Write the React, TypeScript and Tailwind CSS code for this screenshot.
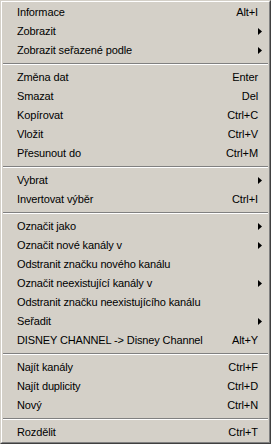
import React from "react";

type Item =
  | { sep: true }
  | { label: string; shortcut?: string; sub?: boolean; sep?: false };

const items: Item[] = [
  { label: "Informace", shortcut: "Alt+I" },
  { label: "Zobrazit", sub: true },
  { label: "Zobrazit seřazené podle", sub: true },
  { sep: true },
  { label: "Změna dat", shortcut: "Enter" },
  { label: "Smazat", shortcut: "Del" },
  { label: "Kopírovat", shortcut: "Ctrl+C" },
  { label: "Vložit", shortcut: "Ctrl+V" },
  { label: "Přesunout do", shortcut: "Ctrl+M" },
  { sep: true },
  { label: "Vybrat", sub: true },
  { label: "Invertovat výběr", shortcut: "Ctrl+I" },
  { sep: true },
  { label: "Označit jako", sub: true },
  { label: "Označit nové kanály v", sub: true },
  { label: "Odstranit značku nového kanálu" },
  { label: "Označit neexistující kanály v", sub: true },
  { label: "Odstranit značku neexistujícího kanálu" },
  { label: "Seřadit", sub: true },
  { label: "DISNEY CHANNEL -> Disney Channel", shortcut: "Alt+Y" },
  { sep: true },
  { label: "Najít kanály", shortcut: "Ctrl+F" },
  { label: "Najít duplicity", shortcut: "Ctrl+D" },
  { label: "Nový", shortcut: "Ctrl+N" },
  { sep: true },
  { label: "Rozdělit", shortcut: "Ctrl+T" },
];

export default function App() {
  return (
    <div
      className="w-[271px] h-[444px] bg-[#d4d0c8] border border-t-[#d4d0c8] border-l-[#d4d0c8] border-b-[#404040] border-r-[#404040] text-black text-[11px]"
      style={{ fontFamily: '"Liberation Sans", Arial, sans-serif' }}
    >
      <div className="h-full border border-t-white border-l-white border-b-[#808080] border-r-[#808080] pt-[1px] flex flex-col">
        {items.map((it, i) =>
          it.sep ? (
            <div key={i} className="h-[8px] pt-[3px] px-[1px]">
              <div className="h-[1px] bg-[#808080]" />
              <div className="h-[1px] bg-white" />
            </div>
          ) : (
            <div key={i} className="h-[19px] flex items-center pl-[15px] pr-[7px] leading-[19px]">
              <span className="whitespace-nowrap tracking-[-0.13px]">{it.label}</span>
              <span className="ml-auto flex items-center">
                {it.shortcut && <span className="mr-[4px] tracking-[-0.1px]">{it.shortcut}</span>}
                {it.sub && (
                  <svg width="4" height="7" viewBox="0 0 4 7" className="block">
                    <path d="M0 0 L4 3.5 L0 7 Z" fill="#000" />
                  </svg>
                )}
              </span>
            </div>
          )
        )}
      </div>
    </div>
  );
}
